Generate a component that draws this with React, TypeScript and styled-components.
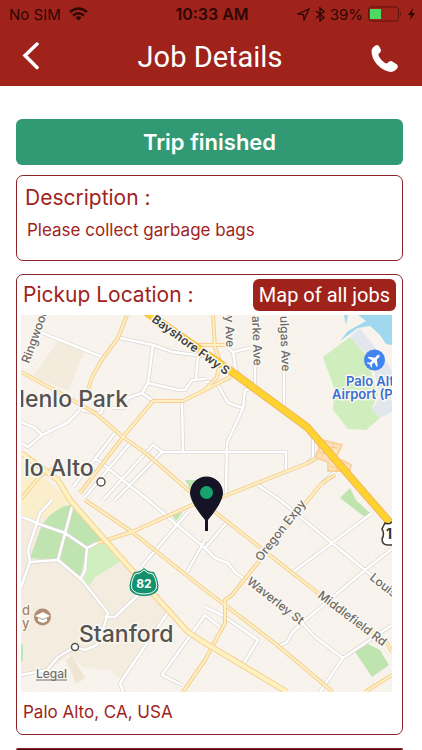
import React from "react";
import styled, { createGlobalStyle } from "styled-components";

const red = "#9f231b";

const GlobalStyle = createGlobalStyle`
  * { box-sizing: border-box; }
  body { margin: 0; background: #fff; font-family: Inter, "Liberation Sans", sans-serif; }
`;

const Screen = styled.div`
  min-height: 100vh;
  display: flex;
  flex-direction: column;
`;
const Header = styled.header`
  background: ${red};
  color: #fff;
`;
const StatusBar = styled.div`
  display: grid;
  grid-template-columns: 1fr auto 1fr;
  align-items: center;
  height: 28px;
  padding: 0 7px 0 9px;
  color: #2c0704;
  font-size: 15px;
`;
const StatusGroup = styled.div<{ $end?: boolean }>`
  display: flex;
  align-items: center;
  justify-content: ${(p) => (p.$end ? "flex-end" : "flex-start")};
  gap: ${(p) => (p.$end ? 5 : 8)}px;
`;
const Clock = styled.span`
  font-size: 16px;
  font-weight: 600;
`;
const NavBar = styled.div`
  display: grid;
  grid-template-columns: 1fr auto 1fr;
  align-items: center;
  height: 58px;
  padding: 0 22px 0 20px;
`;
const Title = styled.h1`
  margin: 0;
  font: 400 29px/36px Roboto, sans-serif;
`;
const IconButton = styled.button<{ $end?: boolean }>`
  display: flex;
  border: 0;
  padding: 0;
  background: none;
  color: inherit;
  justify-self: ${(p) => (p.$end ? "end" : "start")};
`;
const Content = styled.main`
  flex: 1;
  display: flex;
  flex-direction: column;
  padding: 33px 19px 0 16px;
`;
const TripButton = styled.button`
  height: 46px;
  border: 0;
  border-radius: 6px;
  background: #319a74;
  color: #fff;
  font: 600 22px/28px Inter, sans-serif;
`;
const Card = styled.section`
  border: 1px solid #8c2427;
  border-radius: 7px;
  color: ${red};
`;
const DescriptionCard = styled(Card)`
  margin-top: 10px;
  padding: 8px 8px 18px;
`;
const PickupCard = styled(Card)`
  margin-top: 13px;
  padding: 4px 6px 10px 4px;
`;
const NextCard = styled(Card)`
  flex: 1;
  margin-top: 13px;
  border-radius: 7px 7px 0 0;
  border-bottom: 0;
  background: #4d0d0a;
`;
const CardTitle = styled.h2`
  margin: 0;
  font: 400 21px/28px Inter, sans-serif;
`;
const CardText = styled.p`
  margin: 7px 2px 1px;
  font-size: 17px;
  line-height: 22px;
`;
const CardHeader = styled.div`
  display: flex;
  justify-content: space-between;
  align-items: center;
  padding-left: 2px;
`;
const MapButton = styled.button`
  height: 32px;
  padding: 0 6px;
  border: 0;
  border-radius: 6px;
  background: ${red};
  color: #fff;
  font: 400 20px/28px Roboto, sans-serif;
`;
const MapView = styled.svg`
  display: block;
  width: calc(100% - 4px);
  margin-top: 4px;
  background: #f8f4ed;
`;
const Address = styled.p`
  margin: 8px 2px 0;
  font-size: 17px;
  line-height: 24px;
`;

const localRoads = [
  "M40 332L102 357", "M120 338L153 345 172 352 205 356", "M153 345L148 383 178 390H185L192 380 205 379",
  "M148 383L142 393 128 398 122 408H112", "M142 393L152 400", "M80 410L67 423 42 435 28 447 21 443",
  "M21 422L35 428 42 435", "M182 402L183 452", "M162 452H286V472", "M82 410L95 413H101L103 407",
  "M115 433L73 487", "M130 443L85 497", "M103 500L153 445 162 452 115 500", "M95 458L148 500 177 525 205 548",
  "M198 355L196 379", "M227 347L233 352 250 348", "M233 352L237 377", "M255 365V388L245 390 243 408 227 443 226 493",
  "M284 370V408", "M205 382L217 383 228 403 243 408", "M217 383L230 378", "M313 438V458L308 463",
  "M258 485L280 500 332 543 365 570 392 592", "M335 472L325 480 322 487", "M372 513L332 543 293 572",
  "M392 549L365 570 302 623 292 633 287 642 277 647", "M227 522L205 548 215 558 228 563 235 572 243 578 302 623 315 637 343 658",
  "M392 625L343 658 320 692", "M205 607L222 615 258 640 244 663", "M205 615L220 627",
  "M22 517L42 525 65 533 87 548 97 543", "M72 507L58 560 82 580 108 613", "M52 500L40 513 28 550 30 562 58 560",
  "M30 562L21 587", "M87 548L85 570 80 580", "M108 613L102 633 97 645 85 650 75 647 58 657 47 670 21 675",
  "M105 617H115L138 595H145", "M141 567L177 525 188 512", "M205 540L187 572", "M168 612L120 683 123 692",
  "M205 615L162 675 182 685",
].join("");
const mainRoads = [
  "M127 315L118 338 103 358 92 377 88 390", "M21 372L60 393 95 413 123 437 148 455 188 490 215 512 318 593 387 643 392 652",
  "M240 372L205 390 183 401H153L123 437 80 493", "M97 543L132 532 192 505 222 497 308 463 322 455",
  "M85 500L132 532 205 590 225 605 277 645 333 692", "M335 475L322 483 308 500 232 595 225 600V623L212 647 205 660 183 692",
  "M392 675L365 692", "M213 315L215 347 220 362 217 377 205 390", "M198 345H230",
  "M21 499L45 470", "M38 477L57 466",
].join("");
const interchange = "M318 439L342 445 335 459 344 461 351 465 349 473 343 471 328 471 328 462 315 457 319 449Z";
const ramps = "M319 446L338 448M318 452L334 456M326 440L322 458M334 443L329 460M330 466L346 470M338 460L336 472";
const elCamino = "M21 453L58 480 70 500 105 540 130 568 188 632 205 643 287 692";
const bayshore = "M146 312L228 369 307 427 392 525";

const townColor = "#55534f";
const streetColor = "#6d6a66";
const airportColor = "#3c6fd0";

type MapLabelProps = {
  x: number;
  y: number;
  size?: number;
  rotate?: number;
  color?: string;
  weight?: number;
  children: React.ReactNode;
};

function MapLabel({ x, y, size = 12, rotate = 0, color = streetColor, weight = 500, children }: MapLabelProps) {
  return (
    <text
      x={x}
      y={y}
      fontSize={size}
      fill={color}
      fontWeight={weight}
      stroke="#fbf8f3"
      strokeWidth={3}
      strokeLinejoin="round"
      paintOrder="stroke"
      transform={`rotate(${rotate} ${x} ${y})`}
      fontFamily="Inter, sans-serif"
    >
      {children}
    </text>
  );
}

function CityMap() {
  return (
    <MapView viewBox="21 315 371 377" role="img" aria-label="Map of Palo Alto">
      <defs>
        <pattern id="blocks" width="14" height="12" patternUnits="userSpaceOnUse" patternTransform="rotate(38)">
          <path d="M0 0H14M0 0V12" stroke="#f3eee7" fill="none" />
        </pattern>
      </defs>
      <rect x="21" y="315" width="371" height="377" fill="#f8f4ed" />
      <rect x="21" y="315" width="371" height="377" fill="url(#blocks)" />
      <path d="M58 341L84 352 68 391 33 376Z" fill="#f3ebdc" />
      <path d="M300 315H392V530L307 427 290 410Z" fill="#f8f4ed" />
      <path d="M21 500V675L47 672 68 655 85 668 110 670 122 680 168 612 120 562 70 505 52 500Z" fill="#f4ecdf" />
      <path d="M21 458L70 500 62 507 40 521 21 517Z" fill="#fbefcb" />
      <path d="M66 660L72 656 85 678 76 684Z" fill="#f0e5d2" />
      <path d="M62 507L70 505 102 540 87 548 80 578 58 560 30 558 42 525 50 515Z" fill="#bfe4b0" />
      <path d="M88 550L103 542 120 562 95 577 90 585 83 582 87 570Z" fill="#cfefc0" />
      <path d="M185 480H205V492H192Z M172 515L183 512 176 521Z" fill="#bfe4b0" />
      <path d="M21 644L23 645V660L21 662Z" fill="#bfe4b0" />
      <path d="M350 337L323 357 334 388 333 410 348 429 366 430 380 418 372 408 378 395 366 355Z" fill="#d0edbd" />
      <path d="M360 328L350 337 372 360 380 397 372 410 380 418 392 412V370Z" fill="#e2e6ed" />
      <path d="M344 315H348L346 325Z M340 341L348 331 366 321 358 315H392V345L386 344 380 335 370 326 358 328Z" fill="#a0d9ef" />
      <path d="M350 488L340 498 366 518 371 514 356 500Z" fill="#bfe4b0" />
      <path d="M355 652L368 644 380 650 389 665 372 677 362 662Z" fill="#bfe4b0" />
      <g fill="none" strokeLinejoin="round">
        <path d={localRoads} stroke="#dad6d3" strokeWidth="4" />
        <path d={localRoads} stroke="#fff" strokeWidth="2.5" />
        <path d={mainRoads} stroke="#f6cf91" strokeWidth="4" />
        <path d={mainRoads} stroke="#fdf0c4" strokeWidth="2" />
        <path d={interchange} fill="#fbe3bd" stroke="#fad19a" strokeWidth="2" />
        <path d={ramps} stroke="#f8c98b" />
        <path d={elCamino} stroke="#f6cf91" strokeWidth="6" />
        <path d={elCamino} stroke="#fef2c0" strokeWidth="4" />
        <path d={bayshore} stroke="#f2b45c" strokeWidth="8" />
        <path d={bayshore} stroke="#fed32f" strokeWidth="6" />
      </g>
      <MapLabel x={29} y={364} rotate={-70}>Ringwood</MapLabel>
      <MapLabel x={151} y={321} rotate={36} color="#3f3d38" weight={600}>Bayshore Fwy S</MapLabel>
      <MapLabel x={225} y={309} rotate={88}>ey Ave</MapLabel>
      <MapLabel x={252} y={316} rotate={88}>arke Ave</MapLabel>
      <MapLabel x={280} y={316} rotate={88}>ulgas Ave</MapLabel>
      <MapLabel x={261} y={562} rotate={-52}>Oregon Expy</MapLabel>
      <MapLabel x={246} y={583} rotate={38}>Waverley St</MapLabel>
      <MapLabel x={317} y={597} rotate={37}>Middlefield Rd</MapLabel>
      <MapLabel x={369} y={579} rotate={38}>Louis Rd</MapLabel>
      <MapLabel x={4} y={407} size={23} color={townColor}>Menlo Park</MapLabel>
      <MapLabel x={24} y={476} size={23} color={townColor}>lo Alto</MapLabel>
      <MapLabel x={79} y={642} size={23} color={townColor}>Stanford</MapLabel>
      <g fill="#fff" stroke="#57544f" strokeWidth="1.5">
        <circle cx="101" cy="482" r="4" />
        <circle cx="75" cy="647" r="3.5" />
      </g>
      <MapLabel x={346} y={386} size={13} color={airportColor} weight={600}>Palo Alto</MapLabel>
      <MapLabel x={332} y={399} size={13} color={airportColor} weight={600}>Airport (PAO)</MapLabel>
      <circle cx="374.5" cy="360" r="10.5" fill="#4285f0" />
      <path transform="translate(374.5 360) rotate(45) scale(.65)" fill="#fff" d="M0-11Q2-10 2-7V-3L10 3V5L2 3V8L5 10V12L0 10-5 12V10L-2 8V3L-10 5V3L-2-3V-7Q-2-10 0-11Z" />
      <MapLabel x={22} y={615} size={13} color="#a5836a">d</MapLabel>
      <MapLabel x={22} y={628} size={13} color="#a5836a">y</MapLabel>
      <circle cx="42.5" cy="617" r="8.5" fill="#b08d72" />
      <path d="M35 616L43 612 50 616 43 619ZM38 618V621L43 623 47 621V618L43 620Z" fill="#fff" />
      <path d="M144 568Q148 572 154 572 160 583 158 590 154 596 144 596 134 596 130 590 128 583 134 572 140 572 144 568Z" fill="#12916c" />
      <path d="M144 570Q148 574 153 574 158 583 156 589 153 594 144 594 135 594 132 589 130 583 135 574 140 574 144 570Z" fill="none" stroke="#fff" />
      <text x="144" y="588" textAnchor="middle" fill="#fff" fontSize="12" fontWeight="700" fontFamily="Inter">82</text>
      <path d="M385 523Q389 525 392 522H400V545H388Q382 545 382 539 385 534 382 529Z" fill="#fff" stroke="#3c3a38" strokeWidth="1.5" />
      <text x="386" y="539" fill="#333" fontSize="14" fontWeight="700" fontFamily="Inter">1</text>
      <MapLabel x={36} y={678} color="#74706b">Legal</MapLabel>
      <path d="M36 680H67" stroke="#74706b" />
      <path d="M190 493A16.5 16.5 0 0 1 223 493Q223 502 208 520V531H205V520Q190 502 190 493Z" fill="#141426" />
      <circle cx="206.5" cy="492.5" r="6.5" fill="#16a56c" />
    </MapView>
  );
}

export default function App() {
  return (
    <Screen>
      <GlobalStyle />
      <Header>
        <StatusBar>
          <StatusGroup>
            <span>No SIM</span>
            <svg width="19" height="14" viewBox="0 0 19 14" fill="none" stroke="currentColor" strokeWidth="2.5">
              <path d="M1 5Q9.5-2 18 5M4 8.5Q9.5 4 15 8.5" />
              <path d="M6.5 10.5Q9.5 8 12.5 10.5L9.5 13.5Z" fill="currentColor" stroke="none" />
            </svg>
          </StatusGroup>
          <Clock>10:33 AM</Clock>
          <StatusGroup $end>
            <svg width="13" height="13" viewBox="0 0 13 13" fill="none" stroke="currentColor" strokeWidth="1.3">
              <path d="M1 6L12 1 7 12 6.5 6.5Z" />
            </svg>
            <svg width="10" height="15" viewBox="0 0 10 15" fill="none" stroke="currentColor" strokeWidth="1.4">
              <path d="M1 4L9 10.5 5 14V1L9 4.5 1 11" />
            </svg>
            <span>39%</span>
            <svg width="35" height="16" viewBox="0 0 35 16">
              <rect x=".5" y="1" width="30" height="14" rx="3" fill="none" stroke="#5d130e" />
              <rect x="2" y="3" width="11" height="10" fill="#4cd964" />
              <path d="M32 6Q34 8 32 10Z" fill="#5d130e" />
            </svg>
            <svg width="7" height="12" viewBox="0 0 7 12" fill="currentColor">
              <path d="M5 0L0 7H3L2 12 7 5H4Z" />
            </svg>
          </StatusGroup>
        </StatusBar>
        <NavBar>
          <IconButton aria-label="Back">
            <svg width="22" height="30" viewBox="0 0 22 30" fill="none" stroke="currentColor" strokeWidth="3.5" strokeLinecap="round">
              <path d="M17 2L5 13.5 17 25.5" />
            </svg>
          </IconButton>
          <Title>Job Details</Title>
          <IconButton $end aria-label="Call">
            <svg width="30" height="30" viewBox="0 0 30 30" fill="currentColor">
              <path d="M3 5.5Q5 3.2 7 3 8.5 3 9.5 5L11 8Q11.2 10.5 8.5 12 8 14 12 18.5 15 21.5 17 21.5 19 18.5 21.5 19L27 22.5Q28.5 24 27.5 26 25 29.5 21 30 14 29.5 7 22.5 1.500 16 1.5 9 1.6 7 3 5.5Z" />
            </svg>
          </IconButton>
        </NavBar>
      </Header>
      <Content>
        <TripButton>Trip finished</TripButton>
        <DescriptionCard>
          <CardTitle>Description :</CardTitle>
          <CardText>Please collect garbage bags</CardText>
        </DescriptionCard>
        <PickupCard>
          <CardHeader>
            <CardTitle>Pickup Location :</CardTitle>
            <MapButton>Map of all jobs</MapButton>
          </CardHeader>
          <CityMap />
          <Address>Palo Alto, CA, USA</Address>
        </PickupCard>
        <NextCard />
      </Content>
    </Screen>
  );
}
